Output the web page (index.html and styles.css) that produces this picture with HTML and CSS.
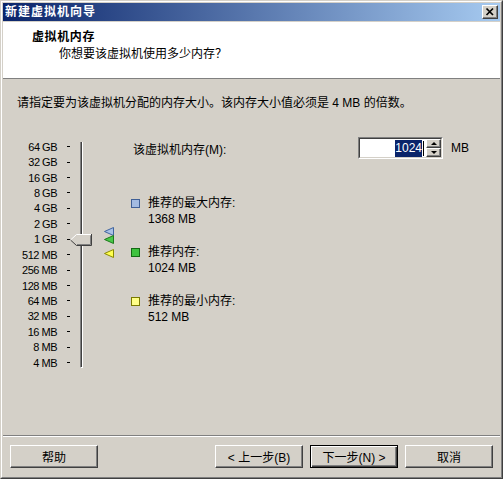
FILE: index.html
```html
<!DOCTYPE html>
<html lang="zh-CN">
<head>
<meta charset="utf-8">
<title>新建虚拟机向导</title>
<link rel="stylesheet" href="styles.css">
</head>
<body>
<div class="window">
  <div class="frame">
    <div class="titlebar">
      <span class="title">新建虚拟机向导</span>
      <span class="close"><svg width="14" height="12" viewBox="0 0 14 12"><path d="M3.5 2.5 L10 9 M10 2.5 L3.5 9" stroke="#000" stroke-width="1.7" fill="none"/></svg></span>
    </div>
    <div class="header">
      <div class="h-title">虚拟机内存</div>
      <div class="h-sub">你想要该虚拟机使用多少内存？</div>
    </div>
    <div class="content">
      <p class="intro">请指定要为该虚拟机分配的内存大小。该内存大小值必须是 4 MB 的倍数。</p>
      <div class="main">
        <div class="scale">
          <div class="rows">
            <div class="row"><span class="lbl">64 GB</span><span class="dash"></span></div>
            <div class="row"><span class="lbl">32 GB</span><span class="dash"></span></div>
            <div class="row"><span class="lbl">16 GB</span><span class="dash"></span></div>
            <div class="row"><span class="lbl">8 GB</span><span class="dash"></span></div>
            <div class="row"><span class="lbl">4 GB</span><span class="dash"></span></div>
            <div class="row"><span class="lbl">2 GB</span><span class="dash"></span></div>
            <div class="row"><span class="lbl">1 GB</span><span class="dash"></span></div>
            <div class="row"><span class="lbl">512 MB</span><span class="dash"></span></div>
            <div class="row"><span class="lbl">256 MB</span><span class="dash"></span></div>
            <div class="row"><span class="lbl">128 MB</span><span class="dash"></span></div>
            <div class="row"><span class="lbl">64 MB</span><span class="dash"></span></div>
            <div class="row"><span class="lbl">32 MB</span><span class="dash"></span></div>
            <div class="row"><span class="lbl">16 MB</span><span class="dash"></span></div>
            <div class="row"><span class="lbl">8 MB</span><span class="dash"></span></div>
            <div class="row"><span class="lbl">4 MB</span><span class="dash"></span></div>
          </div>
          <div class="track"></div>
          <svg class="thumb" width="23" height="13" viewBox="0 0 23 13">
            <polygon points="0.5,6 6.5,0.5 21.5,0.5 21.5,11.5 6.5,11.5" fill="#d4d0c8"/>
            <path d="M0.5 6 L6.5 0.5 L21 0.5" stroke="#fff" fill="none"/>
            <path d="M0.5 6 L6.5 11.5 L21.5 11.5 L21.5 0" stroke="#404040" fill="none"/>
            <path d="M7 10.5 L20.5 10.5 L20.5 1.5" stroke="#808080" fill="none"/>
          </svg>
          <svg class="mk mk-max" width="10" height="9" viewBox="0 0 10 9"><polygon points="0.5,4.5 9.5,0.5 9.5,8.5" fill="#a9c1e6" stroke="#3f649f"/></svg>
          <svg class="mk mk-rec" width="10" height="9" viewBox="0 0 10 9"><polygon points="0.5,4.5 9.5,0.5 9.5,8.5" fill="#48c848" stroke="#1d7a1d"/></svg>
          <svg class="mk mk-min" width="10" height="9" viewBox="0 0 10 9"><polygon points="0.5,4.5 9.5,0.5 9.5,8.5" fill="#ffff50" stroke="#8a8a00"/></svg>
        </div>
        <div class="settings">
          <div class="mem-row">
            <span class="mem-label">该虚拟机内存(M):</span>
            <div class="spin">
              <div class="spin-inner">
                <div class="spin-text"><span class="sel">1024</span><span class="caret"></span></div>
                <div class="spin-btns">
                  <span class="sb sb-up"></span>
                  <span class="sb sb-down"></span>
                </div>
              </div>
            </div>
            <span class="unit">MB</span>
          </div>
          <div class="legend">
            <div class="item"><span class="sq sq-max"></span><div class="txt"><div>推荐的最大内存:</div><div>1368 MB</div></div></div>
            <div class="item"><span class="sq sq-rec"></span><div class="txt"><div>推荐内存:</div><div>1024 MB</div></div></div>
            <div class="item"><span class="sq sq-min"></span><div class="txt"><div>推荐的最小内存:</div><div>512 MB</div></div></div>
          </div>
        </div>
      </div>
    </div>
    <div class="footer">
      <button class="btn">帮助</button>
      <div class="nav">
        <button class="btn">&lt; 上一步(B)</button>
        <button class="btn btn-default">下一步(N) &gt;</button>
        <button class="btn">取消</button>
      </div>
    </div>
  </div>
</div>
</body>
</html>
```

FILE: styles.css
```css
html, body {
  margin: 0;
  padding: 0;
}
body {
  background: #d4d0c8;
  font-family: "Liberation Sans", "Noto Sans CJK SC", sans-serif;
  font-size: 12px;
  color: #000;
}
.window {
  width: 503px;
  height: 479px;
  box-sizing: border-box;
  border: 1px solid;
  border-color: #d4d0c8 #404040 #404040 #d4d0c8;
}
.frame {
  height: 100%;
  box-sizing: border-box;
  border: 1px solid;
  border-color: #fff #808080 #808080 #fff;
  padding: 1px;
  display: flex;
  flex-direction: column;
}
.titlebar {
  flex: none;
  height: 18px;
  background: linear-gradient(to right, #0a246a, #a6caf0);
  display: flex;
  align-items: center;
  justify-content: space-between;
  padding: 0 2px;
}
.title {
  color: #fff;
  font-weight: bold;
  font-size: 12px;
  letter-spacing: 1px;
  line-height: 18px;
}
.close {
  width: 16px;
  height: 14px;
  box-sizing: border-box;
  background: #d4d0c8;
  border: 1px solid;
  border-color: #fff #404040 #404040 #fff;
  box-shadow: inset -1px -1px 0 #808080;
  display: flex;
}
.close svg {
  display: block;
}
.header {
  flex: none;
  margin-top: 1px;
  height: 49px;
  padding: 7px 0 0 29px;
  background: #fff;
  border-bottom: 1px solid #808080;
}
.h-title {
  font-weight: bold;
  letter-spacing: 0.6px;
  line-height: 17px;
}
.h-sub {
  margin-left: 27px;
  line-height: 16px;
}
.content {
  flex: 1;
}
.intro {
  margin: 16px 0 0 14px;
  line-height: 16px;
}
.main {
  display: flex;
  margin-top: 26px;
}
.scale {
  position: relative;
  width: 128px;
  padding-top: 2px;
}
.row {
  height: 15.43px;
  display: flex;
  align-items: center;
}
.lbl {
  width: 54px;
  text-align: right;
  font-size: 11px;
  letter-spacing: -0.5px;
}
.dash {
  width: 3px;
  height: 1px;
  background: #000;
  margin-left: 10px;
}
.track {
  position: absolute;
  left: 77px;
  top: 5px;
  width: 1px;
  height: 225px;
  background: #404040;
  border-left: 1px solid #808080;
  border-right: 1px solid #fff;
  border-bottom: 1px solid #fff;
}
.thumb {
  position: absolute;
  left: 67px;
  top: 97px;
}
.mk {
  position: absolute;
  left: 101px;
}
.mk-max { top: 90px; }
.mk-rec { top: 98px; }
.mk-min { top: 112px; }
.settings {
  flex: 1;
}
.mem-row {
  display: flex;
  align-items: center;
  height: 22px;
}
.mem-label {
  width: 225px;
  padding-left: 2px;
}
.spin {
  width: 85px;
  height: 22px;
  box-sizing: border-box;
  border: 1px solid;
  border-color: #808080 #fff #fff #808080;
  display: flex;
}
.spin-inner {
  flex: 1;
  display: flex;
  background: #fff;
  border: 1px solid;
  border-color: #404040 #d4d0c8 #d4d0c8 #404040;
}
.spin-text {
  flex: 1;
  display: flex;
  justify-content: flex-end;
  align-items: center;
}
.sel {
  background: #0a246a;
  color: #fff;
  line-height: 17px;
}
.caret {
  width: 1px;
  height: 15px;
  background: #000;
  margin: 0 2px 0 1px;
}
.spin-btns {
  width: 15px;
  display: flex;
  flex-direction: column;
}
.sb {
  flex: 1;
  box-sizing: border-box;
  background: #d4d0c8;
  border: 1px solid;
  border-color: #fff #404040 #404040 #fff;
  box-shadow: inset -1px -1px 0 #808080;
  display: flex;
  align-items: center;
  justify-content: center;
}
.sb::after {
  content: "";
  width: 0;
  height: 0;
  border-left: 3px solid transparent;
  border-right: 3px solid transparent;
}
.sb-up::after {
  border-bottom: 3px solid #000;
}
.sb-down::after {
  border-top: 3px solid #000;
}
.unit {
  margin-left: 8px;
}
.legend {
  margin-top: 36px;
  display: flex;
  flex-direction: column;
  gap: 17px;
}
.item {
  display: flex;
  height: 32px;
}
.sq {
  width: 9px;
  height: 9px;
  box-sizing: border-box;
  border: 1px solid;
  margin: 4px 8px 0 0;
}
.sq-max { background: #a3bbe2; border-color: #3f5f96; }
.sq-rec { background: #3ec23e; border-color: #146a14; }
.sq-min { background: #ffff88; border-color: #7a7a00; }
.txt {
  line-height: 16px;
}
.footer {
  flex: none;
  border-top: 1px solid #808080;
  box-shadow: inset 0 1px 0 #fff;
  padding: 9px 7px 8px 7px;
  display: flex;
  justify-content: space-between;
}
.nav {
  display: flex;
  gap: 7px;
}
.btn {
  width: 88px;
  height: 23px;
  box-sizing: border-box;
  margin: 0;
  padding: 0;
  font-family: "Liberation Sans", "Noto Sans CJK SC", sans-serif;
  font-size: 12px;
  color: #000;
  background: #d4d0c8;
  border: 1px solid;
  border-color: #fff #404040 #404040 #fff;
  box-shadow: inset -1px -1px 0 #808080;
}
.btn-default {
  border-color: #000;
  box-shadow: inset 1px 1px 0 #fff, inset -1px -1px 0 #404040, inset -2px -2px 0 #808080;
}
```
